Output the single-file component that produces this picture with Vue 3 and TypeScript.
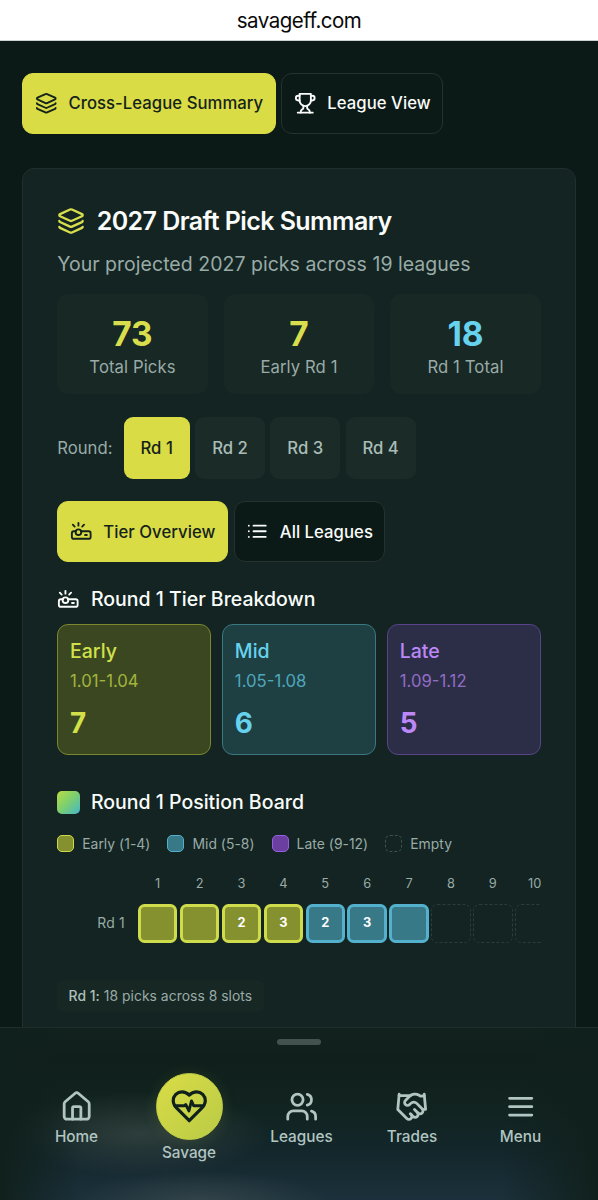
<script setup lang="ts">
import { ref, computed } from 'vue'

type Tone = 'early' | 'mid' | 'late' | 'empty'
interface Slot { pos: number; tone: Tone; count: string }

const icons = {
  layers: '<path d="M12.83 2.18a2 2 0 0 0-1.66 0L2.6 6.08a1 1 0 0 0 0 1.83l8.58 3.91a2 2 0 0 0 1.66 0l8.58-3.9a1 1 0 0 0 0-1.83z"/><path d="M2 12a1 1 0 0 0 .58.91l8.6 3.91a2 2 0 0 0 1.65 0l8.58-3.9A1 1 0 0 0 22 12"/><path d="M2 17a1 1 0 0 0 .58.91l8.6 3.91a2 2 0 0 0 1.65 0l8.58-3.9A1 1 0 0 0 22 17"/>',
  trophy: '<path d="M6 9H4.5a2.5 2.5 0 0 1 0-5H6"/><path d="M18 9h1.5a2.5 2.5 0 0 0 0-5H18"/><path d="M4 22h16"/><path d="M10 14.66V17c0 .55-.47.98-.97 1.21C7.85 18.75 7 20.24 7 22"/><path d="M14 14.66V17c0 .55.47.98.97 1.21C16.15 18.75 17 20.24 17 22"/><path d="M18 2H6v7a6 6 0 0 0 12 0V2Z"/>',
  projector: '<path d="M5 7 3 5"/><path d="M9 6V3"/><path d="m13 7 2-2"/><circle cx="9" cy="13" r="3"/><path d="M11.83 12H20a2 2 0 0 1 2 2v4a2 2 0 0 1-2 2H4a2 2 0 0 1-2-2v-4a2 2 0 0 1 2-2h2.17"/><path d="M16 16h2"/>',
  list: '<path d="M8 6h13M8 12h13M8 18h13M3 6h.01M3 12h.01M3 18h.01"/>',
  home: '<path d="M15 21v-8a1 1 0 0 0-1-1h-4a1 1 0 0 0-1 1v8"/><path d="M3 10a2 2 0 0 1 .709-1.528l7-5.999a2 2 0 0 1 2.582 0l7 5.999A2 2 0 0 1 21 10v9a2 2 0 0 1-2 2H5a2 2 0 0 1-2-2z"/>',
  heart: '<path d="M19 14c1.49-1.46 3-3.21 3-5.5A5.5 5.5 0 0 0 16.5 3c-1.76 0-3 .5-4.5 2-1.5-1.5-2.74-2-4.5-2A5.5 5.5 0 0 0 2 8.5c0 2.3 1.5 4.05 3 5.5l7 7Z"/><path stroke-width="1.8" d="M3.1 11.7H9l.8-.8 2 4 1.6-6.2 1.4 3h6.2"/>',
  users: '<path d="M16 21v-2a4 4 0 0 0-4-4H6a4 4 0 0 0-4 4v2"/><circle cx="9" cy="7" r="4"/><path d="M22 21v-2a4 4 0 0 0-3-3.87"/><path d="M16 3.13a4 4 0 0 1 0 7.75"/>',
  handshake: '<path d="m11 17 2 2a1 1 0 1 0 3-3"/><path d="m14 14 2.5 2.5a1 1 0 1 0 3-3l-3.88-3.88a3 3 0 0 0-4.24 0l-.88.88a1 1 0 1 1-3-3l2.81-2.81a5.79 5.79 0 0 1 7.06-.87l.47.28a2 2 0 0 0 1.42.25L21 4"/><path d="m21 3 1 11h-2"/><path d="M3 3 2 14l6.5 6.5a1 1 0 1 0 3-3"/><path d="M3 4h8"/>',
  menu: '<path d="M4 6h16M4 12h16M4 18h16"/>',
}

const round = ref(1)
const rounds = [1, 2, 3, 4]
const stats = [
  { value: 73, label: 'Total Picks', tone: 'early' },
  { value: 7, label: 'Early Rd 1', tone: 'early' },
  { value: 18, label: 'Rd 1 Total', tone: 'mid' },
]
const tiers = [
  { name: 'Early', range: '1.01-1.04', count: 7, tone: 'early' },
  { name: 'Mid', range: '1.05-1.08', count: 6, tone: 'mid' },
  { name: 'Late', range: '1.09-1.12', count: 5, tone: 'late' },
]
const legend = [
  { label: 'Early (1-4)', tone: 'early' },
  { label: 'Mid (5-8)', tone: 'mid' },
  { label: 'Late (9-12)', tone: 'late' },
  { label: 'Empty', tone: 'empty' },
]
const counts: Record<number, string> = { 3: '2', 4: '3', 5: '2', 6: '3' }
const slots = computed<Slot[]>(() =>
  Array.from({ length: 10 }, (_, i) => {
    const pos = i + 1
    const tone: Tone = pos <= 4 ? 'early' : pos <= 7 ? 'mid' : 'empty'
    return { pos, tone, count: counts[pos] ?? '' }
  }),
)
const nav = [
  { label: 'Home', icon: icons.home },
  { label: 'Savage', icon: icons.heart, main: true },
  { label: 'Leagues', icon: icons.users },
  { label: 'Trades', icon: icons.handshake },
  { label: 'Menu', icon: icons.menu },
]
</script>

<template>
  <div class="screen">
    <header class="address"><span>savageff.com</span></header>

    <main class="page">
      <div class="tabs">
        <button class="tab active summary"><svg class="icon" viewBox="0 0 24 24" v-html="icons.layers" /><span>Cross-League Summary</span></button>
        <button class="tab league"><svg class="icon" viewBox="0 0 24 24" v-html="icons.trophy" /><span>League View</span></button>
      </div>

      <section class="card">
        <h1 class="title"><svg class="icon" viewBox="0 0 24 24" v-html="icons.layers" /><span>2027 Draft Pick Summary</span></h1>
        <p class="subtitle">Your projected 2027 picks across 19 leagues</p>

        <div class="stats">
          <div v-for="s in stats" :key="s.label" class="stat" :class="s.tone">
            <strong>{{ s.value }}</strong>
            <span>{{ s.label }}</span>
          </div>
        </div>

        <div class="rounds">
          <span class="rounds-label">Round:</span>
          <button v-for="r in rounds" :key="r" class="round" :class="{ active: r === round }" @click="round = r">Rd {{ r }}</button>
        </div>

        <div class="tabs inner">
          <button class="tab active overview"><svg class="icon" viewBox="0 0 24 24" v-html="icons.projector" /><span>Tier Overview</span></button>
          <button class="tab all"><svg class="icon" viewBox="0 0 24 24" v-html="icons.list" /><span>All Leagues</span></button>
        </div>

        <h2 class="heading"><svg class="icon" viewBox="0 0 24 24" v-html="icons.projector" /><span>Round 1 Tier Breakdown</span></h2>
        <div class="tiers">
          <div v-for="t in tiers" :key="t.name" class="tier" :class="t.tone">
            <h3>{{ t.name }}</h3>
            <p>{{ t.range }}</p>
            <strong>{{ t.count }}</strong>
          </div>
        </div>

        <h2 class="heading board-heading"><i class="gradient-chip" /><span>Round 1 Position Board</span></h2>
        <div class="legend">
          <span v-for="l in legend" :key="l.label" class="legend-item"><i class="swatch" :class="l.tone" />{{ l.label }}</span>
        </div>

        <div class="board">
          <div class="board-row numbers">
            <span class="row-label" />
            <span v-for="s in slots" :key="s.pos" class="number">{{ s.pos }}</span>
          </div>
          <div class="board-row">
            <span class="row-label">Rd 1</span>
            <span v-for="s in slots" :key="s.pos" class="cell" :class="s.tone">{{ s.count }}</span>
          </div>
        </div>

        <div class="note"><b>Rd 1:</b> 18 picks across 8 slots</div>
      </section>
    </main>

    <nav class="dock">
      <i class="handle" />
      <div class="dock-items">
        <a v-for="n in nav" :key="n.label" class="dock-item" :class="{ main: n.main }">
          <span class="dock-icon"><svg class="icon" viewBox="0 0 24 24" v-html="n.icon" /></span>
          <span class="dock-label">{{ n.label }}</span>
        </a>
      </div>
    </nav>
  </div>
</template>

<style>
html, body { margin: 0; background: #0c1a17; }
</style>

<style scoped>
* { box-sizing: border-box; }
.screen {
  position: relative; width: 598px; height: 1200px; overflow: hidden;
  background: #0c1a17; color: #fafcfa;
  font-family: Inter, "Liberation Sans", sans-serif;
}
h1, h2, h3, p { margin: 0; }
button { font: inherit; color: inherit; padding: 0; cursor: pointer; }
span { white-space: nowrap; }
.icon { flex: none; fill: none; stroke: currentColor; stroke-width: 2; stroke-linecap: round; stroke-linejoin: round; }
.address {
  height: 41px; background: #fff; border-bottom: 1px solid #cdd2d0; color: #090909;
  display: flex; justify-content: center; align-items: center; font-size: 20.5px; letter-spacing: -0.5px;
}
.page { padding: 31.5px 22.4px 0; }
.tabs { display: flex; gap: 5.5px; height: 61.5px; }
.tab {
  display: flex; align-items: center; gap: 11.2px; padding-left: 11.4px;
  border: 1.4px solid #25312e; border-radius: 11px; background: #0c1a17;
  font-size: 16.7px; font-weight: 500; letter-spacing: 0.04px;
}
.tab .icon { width: 22.5px; height: 22.5px; }
.tab.active { background: #dadc46; border-color: #dadc46; color: #14231a; }
.summary { width: 253.3px; }
.league { width: 161.5px; }
.overview { width: 171px; }
.all { width: 151px; }

.card {
  margin-top: 33.5px; height: 940px; padding: 33.5px 33.8px 0;
  background: #132422; border: 1.4px solid #202f2b; border-radius: 12px;
}
.title { display: flex; align-items: center; gap: 11.5px; height: 38px; font-size: 25px; font-weight: 600; letter-spacing: -0.57px; }
.title .icon { width: 28px; height: 28px; color: #d9df4c; }
.subtitle { height: 28px; line-height: 28px; margin-top: 9.5px; font-size: 19.5px; letter-spacing: 0.025px; color: #99aba7; white-space: nowrap; }
.stats { display: grid; grid-template-columns: repeat(3, 1fr); gap: 16px; margin-top: 16px; }
.stat { height: 100px; padding-top: 19px; border-radius: 11px; background: #182825; text-align: center; }
.stat strong { display: block; height: 42.5px; line-height: 43px; font-size: 33.4px; font-weight: 700; }
.stat span { display: block; height: 24px; line-height: 24px; font-size: 16.7px; color: #99aba7; letter-spacing: 0.08px; }
.stat.early strong { color: #d9df4c; }
.stat.mid strong { color: #67d2ee; }

.rounds { display: flex; align-items: center; gap: 5.3px; height: 61.5px; margin-top: 23.5px; font-size: 16.7px; color: #99aba7; }
.rounds-label { width: 61.2px; }
.round { width: 70px; height: 61.5px; border: 0; border-radius: 9px; background: #1b2b28; font-weight: 500; color: #a9bcb7; }
.round.active { width: 66px; background: #dadc46; color: #14231a; }
.inner { margin-top: 22.4px; }

.heading { display: flex; align-items: center; gap: 11.2px; height: 28px; margin-top: 22.5px; font-size: 19.5px; font-weight: 500; }
.heading .icon { width: 22.5px; height: 22.5px; }
.tiers { display: grid; grid-template-columns: repeat(3, 1fr); gap: 11px; margin-top: 11px; }
.tier { height: 131px; padding: 12px 11.8px; border: 1.4px solid; border-radius: 11px; }
.tier h3 { height: 28px; line-height: 28px; font-size: 19.5px; font-weight: 500; }
.tier p { height: 23px; line-height: 23px; margin-top: 5px; font-size: 16.7px; opacity: .7; }
.tier strong { display: block; height: 39px; line-height: 39px; margin-top: 11px; font-size: 27.8px; font-weight: 700; }
.tier.early { background: #3a4720; border-color: #7c872f; color: #d2e14a; }
.tier.mid { background: #1e4042; border-color: #3a7882; color: #67d2ee; }
.tier.late { background: #2c2e48; border-color: #59438a; color: #bc87f7; }

.board-heading { margin-top: 33.6px; }
.gradient-chip { width: 22.5px; height: 22.5px; border-radius: 5px; background: linear-gradient(135deg, #b9dc42, #7bcf70 50%, #45b5cb); }
.legend { display: flex; gap: 17px; height: 20px; margin-top: 17.2px; align-items: center; font-size: 13.9px; letter-spacing: 0.03px; color: #99aba7; }
.legend-item { display: flex; align-items: center; gap: 8px; }
.swatch { width: 17px; height: 17px; border: 1.4px solid; border-radius: 5px; }
.swatch.early, .cell.early { background: #85902f; border-color: #cedc4b; }
.swatch.mid, .cell.mid { background: #387987; border-color: #54b1cd; }
.swatch.late { background: #6b3fa0; border-color: #945fe0; }
.swatch.empty { border: 1.4px dashed #40504c; }
.board { margin-top: 21.4px; overflow: hidden; height: 76px; }
.board-row { display: flex; gap: 2.5px; width: 620px; font-size: 13.9px; letter-spacing: 0.25px; color: #99aba7; }
.numbers { height: 29px; line-height: 18px; font-size: 12.8px; letter-spacing: 0; }
.row-label { flex: none; width: 78.3px; padding-right: 10.5px; text-align: right; line-height: 39px; }
.number { flex: none; width: 39.4px; text-align: center; }
.cell {
  flex: none; width: 39.4px; height: 39.4px; line-height: 32px; border: 3px solid; border-radius: 6.5px;
  text-align: center; font-size: 12.8px; letter-spacing: 0; font-weight: 700; color: #fff;
}
.cell.empty { border: 1.4px dashed #2a3d3a; }
.note { width: 207px; height: 32px; line-height: 32px; margin-top: 29px; padding-left: 11.4px; border-radius: 5px; background: #172724; font-size: 13.9px; letter-spacing: 0.03px; color: #99aba7; white-space: nowrap; }
.note b { font-weight: 500; color: #adc0bb; }

.dock {
  position: absolute; left: 0; right: 0; bottom: 0; height: 173px; border-top: 1.4px solid #1f2e2a;
  background:
    linear-gradient(90deg, #10201c 0, rgba(16, 32, 28, 0) 80px, rgba(16, 32, 28, 0) 500px, #10201c 100%),
    radial-gradient(ellipse 130px 42px at 140px 106px, rgba(75, 88, 82, .48), rgba(75, 88, 82, 0)),
    radial-gradient(ellipse 130px 32px at 200px 175px, rgba(68, 82, 84, .6), rgba(68, 82, 84, 0)),
    linear-gradient(180deg, #12221f 0, #101f1b 30px, #122421 85px, #13262a 120px, #1a2e38 160px, #1b303a 100%);
}
.handle { display: block; width: 44.5px; height: 6px; margin: 11px auto 0; border-radius: 3px; background: #44524f; }
.dock-items { display: grid; grid-template-columns: 113px 112px 113px 108px 109px; margin: 45px 0 0 20px; }
.dock-item { display: flex; flex-direction: column; align-items: center; color: #b1c5c1; }
.dock-icon { display: flex; align-items: center; justify-content: center; height: 34px; }
.dock-icon .icon { width: 33.4px; height: 33.4px; }
.dock-label { height: 22px; line-height: 22px; margin-top: 1.5px; font-size: 15.3px; font-weight: 500; }
.main .dock-icon {
  width: 67px; height: 67px; margin-top: -17px; border-radius: 50%; color: #10201b;
  border: 1.4px solid #c3d044; background: linear-gradient(135deg, #dadc46, #b9cb46);
  box-shadow: 0 2px 16px rgba(190, 210, 80, .12);
}
.main .dock-icon .icon { width: 38.5px; height: 38.5px; }
</style>
